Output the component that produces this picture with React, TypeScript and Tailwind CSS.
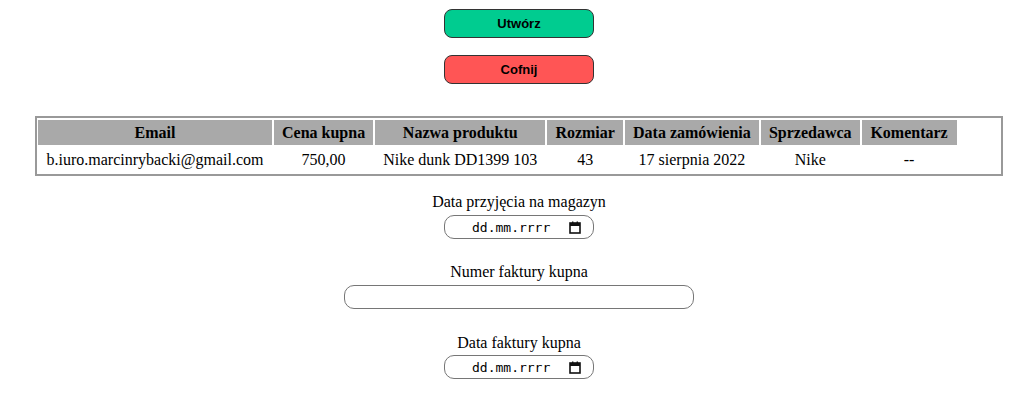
import { useState } from "react";

const headers = [
  { label: "Email", w: "w-[234px]" },
  { label: "Cena kupna", w: "w-[99px]" },
  { label: "Nazwa produktu", w: "w-[170px]" },
  { label: "Rozmiar", w: "w-[75px]" },
  { label: "Data zamówienia", w: "w-[134px]" },
  { label: "Sprzedawca", w: "w-[98px]" },
  { label: "Komentarz", w: "w-[95px]" },
];

const row = [
  "b.iuro.marcinrybacki@gmail.com",
  "750,00",
  "Nike dunk DD1399 103",
  "43",
  "17 sierpnia 2022",
  "Nike",
  "--",
];

const CalendarIcon = () => (
  <svg width="12" height="13" viewBox="0 0 12 13" className="shrink-0">
    <rect x="1" y="2" width="10" height="10" fill="none" stroke="#111" strokeWidth="1.6" />
    <rect x="1" y="2" width="10" height="3" fill="#111" />
    <rect x="3" y="0.5" width="1.4" height="2" fill="#111" />
    <rect x="7.6" y="0.5" width="1.4" height="2" fill="#111" />
  </svg>
);

const DateField = () => (
  <div className="flex h-[24px] w-[150px] items-center justify-between rounded-[10px] border border-[#767676] bg-white pl-[27px] pr-[12px]">
    <span className="font-['DejaVu_Sans_Mono',monospace] text-[13px] leading-none text-black">dd.mm.rrrr</span>
    <CalendarIcon />
  </div>
);

export default function App() {
  const [nr, setNr] = useState("");

  return (
    <div className="flex min-h-[409px] flex-col items-center bg-white pl-[4px] pt-[9px] font-['Liberation_Serif',serif] text-[16px] text-black">
      <button className="h-[29px] w-[150px] rounded-[8px] border border-[#333] bg-[#00cc90] font-['Liberation_Sans',Arial,sans-serif] text-[13px] font-bold">
        Utwórz
      </button>
      <button className="mt-[17px] h-[29px] w-[150px] rounded-[8px] border border-[#333] bg-[#ff5555] font-['Liberation_Sans',Arial,sans-serif] text-[13px] font-bold">
        Cofnij
      </button>

      <div className="mt-[32px] w-[968px] border-2 border-[#999]">
        <table className="-ml-px border-separate border-spacing-[2px]">
          <thead>
            <tr>
              {headers.map((h) => (
                <th key={h.label} className={`${h.w} whitespace-nowrap bg-[#a9a9a9] px-2 py-[3px] leading-[19px] font-bold`}>
                  {h.label}
                </th>
              ))}
            </tr>
          </thead>
          <tbody>
            <tr>
              {row.map((c, i) => (
                <td key={i} className="whitespace-nowrap px-2 py-[3px] text-center leading-[19px]">
                  {c}
                </td>
              ))}
            </tr>
          </tbody>
        </table>
      </div>

      <label className="mt-[17px] leading-[18px]">Data przyjęcia na magazyn</label>
      <div className="mt-[4px]">
        <DateField />
      </div>

      <label className="mt-[24px] leading-[18px]">Numer faktury kupna</label>
      <input
        value={nr}
        onChange={(e) => setNr(e.target.value)}
        className="mt-[4px] h-[24px] w-[350px] rounded-[10px] border border-[#767676] bg-white px-2 outline-none"
      />

      <label className="mt-[25px] leading-[18px]">Data faktury kupna</label>
      <div className="mt-[3px]">
        <DateField />
      </div>
    </div>
  );
}
